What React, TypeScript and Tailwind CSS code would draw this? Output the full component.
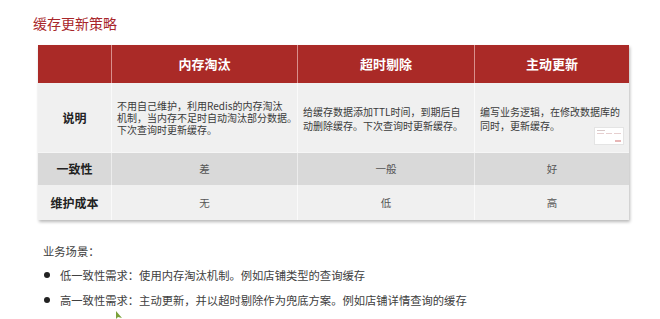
const FONT = { fontFamily: '"Noto Sans CJK SC", "Noto Sans", sans-serif' };

const cols = ['内存淘汰', '超时剔除', '主动更新'];

function Lines({ lines, lh }: { lines: string[]; lh: string }) {
  return (
    <div className="flex flex-col">
      {lines.map(l => (
        <span key={l} className={`block whitespace-nowrap ${lh}`}>{l}</span>
      ))}
    </div>
  );
}

function SlideThumb() {
  return (
    <div className="absolute right-[5px] bottom-[7px] w-[30px] h-[18px] bg-white border border-[#e4e4e4] flex flex-col p-[2px] gap-[2px]">
      <div className="h-px bg-[#d8c8c8] w-[8px]" />
      <div className="flex gap-[2px] flex-1">
        <div className="flex-1 border-t border-[#e6cfcf]" />
        <div className="flex-1 border-t border-[#e6cfcf]" />
        <div className="flex-1 border-t border-[#e6cfcf]" />
      </div>
      <div className="h-[2px] w-[6px] self-end bg-[#e7b6b6]" />
    </div>
  );
}

export default function App() {
  return (
    <div className="w-[660px] h-[319px] bg-white relative overflow-hidden text-[#333]" style={FONT}>
      <h1 className="pl-[33px] pt-[13px] text-[14px] leading-[20px] text-[#a8262a]">缓存更新策略</h1>

      <div className="ml-[38px] mt-[12px] w-[591px] shadow-[1px_2px_3px_rgba(0,0,0,0.28)]">
        <div className="grid grid-cols-[73px_186px_177px_155px] h-[38px] bg-[#aa2a27] text-white font-bold text-[13px]">
          <div />
          {cols.map(c => (
            <div key={c} className="border-l border-[#d98f8c] flex items-center justify-center">{c}</div>
          ))}
        </div>

        <div className="grid grid-cols-[73px_186px_177px_155px] h-[69px] bg-[#f0f0f0] text-[10px] text-[#3a3a3a]">
          <div className="flex items-center justify-center font-bold text-[12px] text-[#222]">说明</div>
          <div className="border-l border-[#fafafa] flex items-center pl-[5px]">
            <Lines lh="leading-[12px]" lines={['不用自己维护，利用Redis的内存淘汰', '机制，当内存不足时自动淘汰部分数据。', '下次查询时更新缓存。']} />
          </div>
          <div className="border-l border-[#fafafa] flex items-center pl-[5px] pt-[2px]">
            <Lines lh="leading-[13.5px]" lines={['给缓存数据添加TTL时间，到期后自', '动删除缓存。下次查询时更新缓存。']} />
          </div>
          <div className="relative border-l border-[#fafafa] flex items-center pl-[5px] pt-[2px]">
            <Lines lh="leading-[14px]" lines={['编写业务逻辑，在修改数据库的', '同时，更新缓存。']} />
            <SlideThumb />
          </div>
        </div>

        <div className="grid grid-cols-[73px_186px_177px_155px] h-[33px] bg-[#d9d9d9] border-t border-[#f6f6f6] text-[10.5px] text-[#555]">
          <div className="flex items-center justify-center font-bold text-[12px] text-[#222]">一致性</div>
          <div className="border-l border-[#ececec] flex items-center justify-center">差</div>
          <div className="border-l border-[#ececec] flex items-center justify-center">一般</div>
          <div className="border-l border-[#ececec] flex items-center justify-center">好</div>
        </div>

        <div className="grid grid-cols-[73px_186px_177px_155px] h-[35px] bg-[#f0f0f0] text-[10.5px] text-[#555]">
          <div className="flex items-center justify-center font-bold text-[12px] text-[#222]">维护成本</div>
          <div className="border-l border-[#fafafa] flex items-center justify-center">无</div>
          <div className="border-l border-[#fafafa] flex items-center justify-center">低</div>
          <div className="border-l border-[#fafafa] flex items-center justify-center">高</div>
        </div>
      </div>

      <div className="pl-[43px] mt-[21px] text-[11.3px] text-[#404040]">
        <p className="leading-[20px]">业务场景：</p>
        <ul className="mt-[4px] flex flex-col gap-[5px]">
          <li className="flex items-center leading-[20px]">
            <span className="w-[6px] h-[6px] rounded-full bg-[#222] ml-[1px] mr-[10px]" />
            低一致性需求：使用内存淘汰机制。例如店铺类型的查询缓存
          </li>
          <li className="flex items-center leading-[20px]">
            <span className="w-[6px] h-[6px] rounded-full bg-[#222] ml-[1px] mr-[10px]" />
            高一致性需求：主动更新，并以超时剔除作为兜底方案。例如店铺详情查询的缓存
          </li>
        </ul>
      </div>

      <svg className="absolute left-[115px] top-[311px]" width="8" height="9" viewBox="0 0 8 9">
        <path d="M1 0 L1 8 L3 6 L7 7 Z" fill="#7aa13a" />
      </svg>
    </div>
  );
}
